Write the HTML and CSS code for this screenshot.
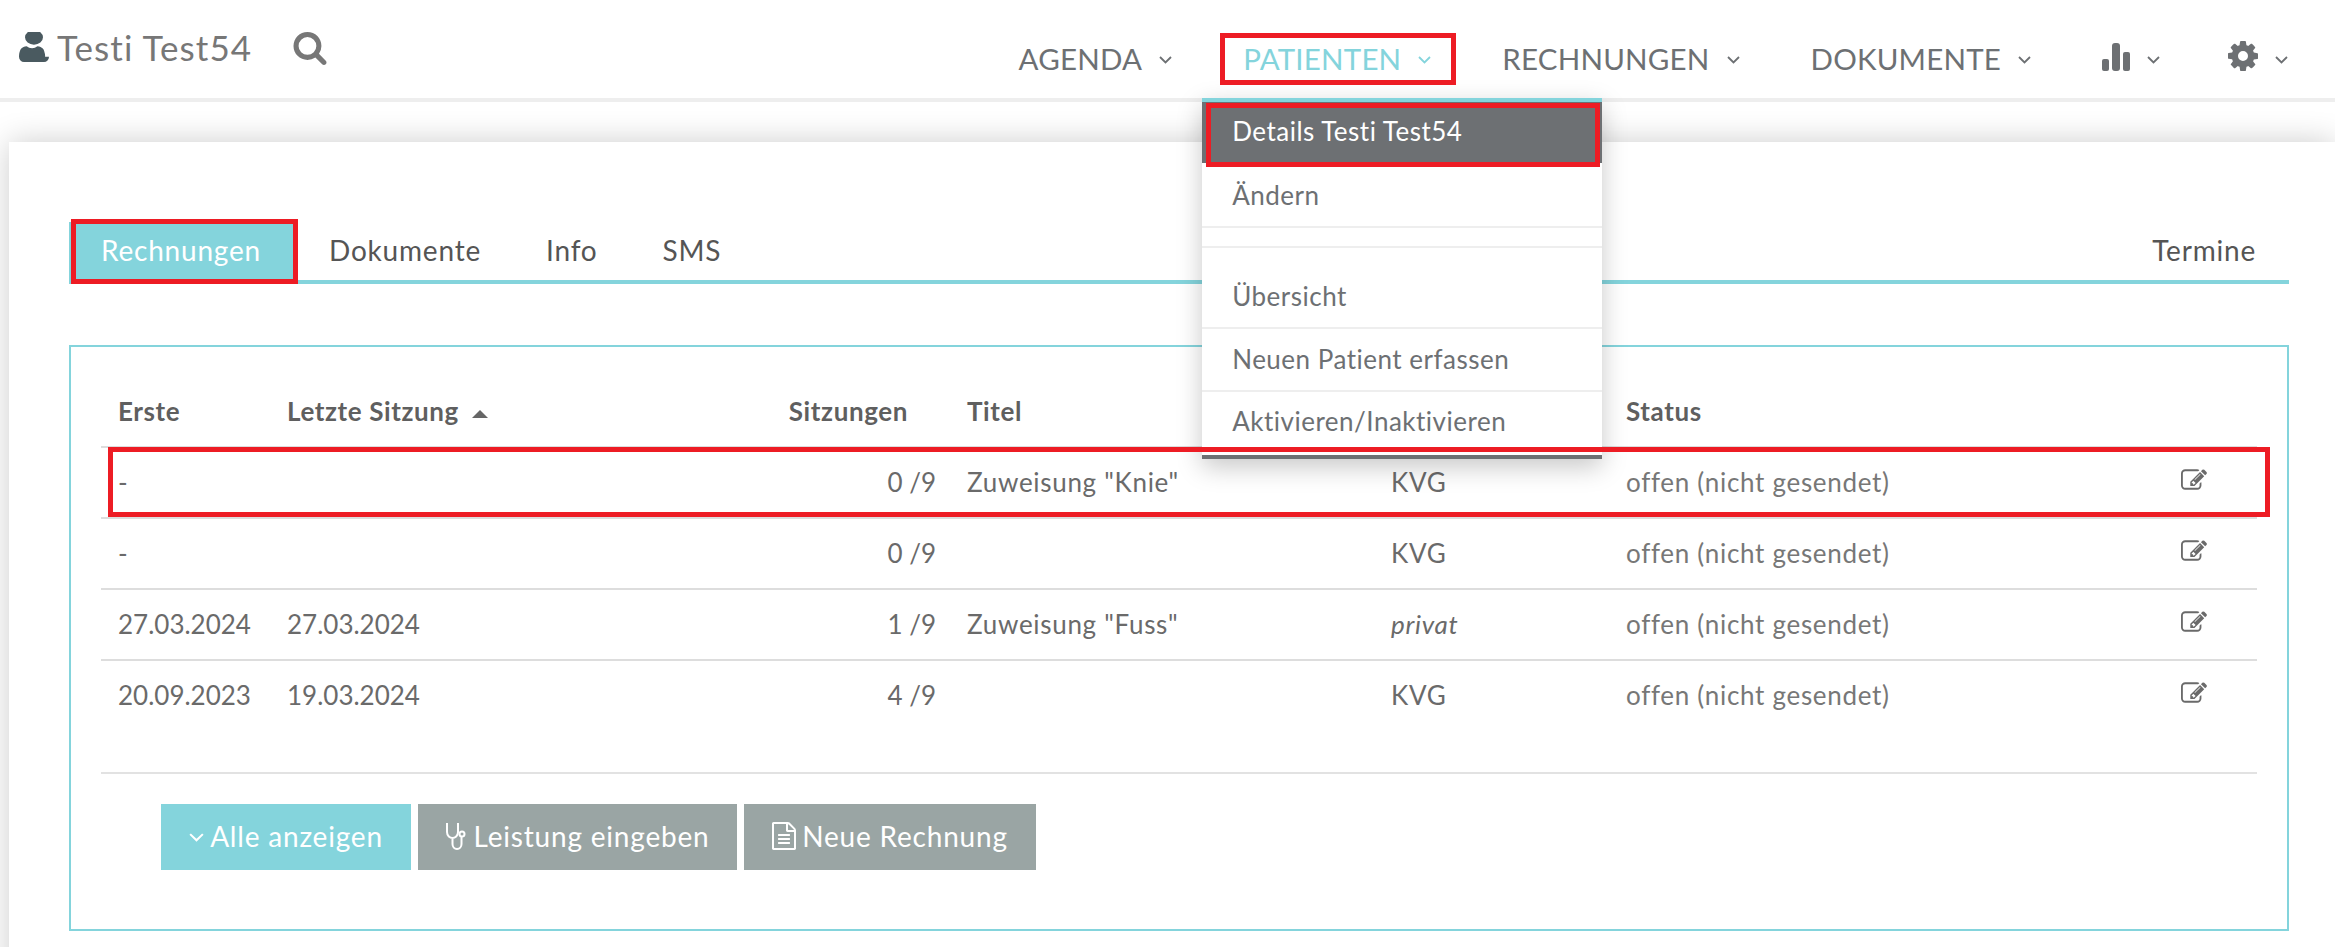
FILE: index.html
```html
<!DOCTYPE html>
<html lang="de">
<head>
  <meta charset="UTF-8">
  <title>Rechnungen - Testi Test54</title>
  <link rel="stylesheet" href="styles.css">
</head>
<body>
  <svg class="sprite" xmlns="http://www.w3.org/2000/svg">
    <symbol id="i-user" viewBox="256 110 1280 1560" preserveAspectRatio="none"><path d="M1536 1399q0 109-62.500 187t-150.500 78h-854q-88 0-150.500-78t-62.500-187q0-85 8.500-157.500t31.500-145.500 58.500-125 94-85 134-33q98 96 230 96t230-96q80 0 134 33t94 85 58.500 125 31.500 145.500 8.500 157.500zm-256-1011q0 159-112.500 271.500t-271.500 112.500-271.500-112.500-112.500-271.500 112.500-271.500 271.500-112.500 271.500 112.500 112.500 271.500z"/></symbol>
    <symbol id="i-search" viewBox="64 128 1664 1664"><path d="M1216 832q0-185-131.500-316.500t-316.500-131.500-316.500 131.500-131.500 316.500 131.500 316.500 316.500 131.500 316.500-131.500 131.500-316.500zm512 832q0 52-38 90t-90 38q-54 0-90-38l-343-342q-179 124-399 124-143 0-273.500-55.500t-225-150-150-225-55.500-273.500 55.500-273.500 150-225 225-150 273.500-55.500 273.500 55.500 225 150 150 225 55.500 273.500q0 220-124 399l343 343q37 37 37 90z"/></symbol>
    <symbol id="i-cog" viewBox="128 128 1536 1536"><path d="M1152 896q0-106-75-181t-181-75-181 75-75 181 75 181 181 75 181-75 75-181zm512-109v222q0 12-8 23t-20 13l-185 28q-19 54-39 91 35 50 107 138 10 12 10 25t-9 23q-27 37-99 108t-94 71q-12 0-26-9l-138-108q-44 23-91 38-16 136-29 186-7 28-36 28h-222q-14 0-24.500-8.500t-11.500-21.500l-28-184q-49-16-90-37l-141 107q-10 9-25 9-14 0-25-11-126-114-165-168-7-10-7-23 0-12 8-23 15-21 51-66.500t54-70.500q-27-50-41-99l-183-27q-13-2-21-12.500t-8-23.500v-222q0-12 8-23t19-13l186-28q14-46 39-92-40-57-107-138-10-12-10-24 0-10 9-23 26-36 98.500-107.500t94.500-71.500q13 0 26 10l138 107q44-23 91-38 16-136 29-186 7-28 36-28h222q14 0 24.500 8.500t11.500 21.500l28 184q49 16 90 37l142-107q9-9 24-9 13 0 25 10 129 119 165 170 7 8 7 22 0 12-8 23-15 21-51 66.500t-54 70.500q26 50 41 98l183 28q13 2 21 12.500t8 23.500z"/></symbol>
    <symbol id="i-edit" viewBox="0 128 1792 1408"><path d="M888 1184l116-116-152-152-116 116v56h96v96h56zm440-720q-16-16-33 1l-350 350q-17 17-1 33t33-1l350-350q17-17 1-33zm80 594v190q0 119-84.500 203.500t-203.500 84.500h-832q-119 0-203.500-84.500t-84.500-203.500v-832q0-119 84.500-203.500t203.500-84.500h832q63 0 117 25 15 7 18 23 3 17-9 29l-49 49q-14 14-32 8-23-6-45-6h-832q-66 0-113 47t-47 113v832q0 66 47 113t113 47h832q66 0 113-47t47-113v-126q0-13 9-22l64-64q15-15 35-7t20 29zm-96-738l288 288-672 672h-288v-288zm444 132l-92 92-288-288 92-92q28-28 68-28t68 28l152 152q28 28 28 68t-28 68z"/></symbol>
    <symbol id="i-file" viewBox="128 0 1536 1792"><path d="M1596 380q28 28 48 76t20 88v1152q0 40-28 68t-68 28h-1344q-40 0-68-28t-28-68v-1600q0-40 28-68t68-28h896q40 0 88 20t76 48zm-444-244v376h376q-10-29-22-41l-313-313q-12-12-41-22zm384 1528v-1024h-416q-40 0-68-28t-28-68v-416h-768v1536h1280zm-1024-864q0-14 9-23t23-9h704q14 0 23 9t9 23v64q0 14-9 23t-23 9h-704q-14 0-23-9t-9-23v-64zm736 224q14 0 23 9t9 23v64q0 14-9 23t-23 9h-704q-14 0-23-9t-9-23v-64q0-14 9-23t23-9h704zm0 256q14 0 23 9t9 23v64q0 14-9 23t-23 9h-704q-14 0-23-9t-9-23v-64q0-14 9-23t23-9h704z"/></symbol>
    <symbol id="i-chevron" viewBox="0 0 13 8" preserveAspectRatio="none"><path d="M1 1l5.500 5.500L12 1" fill="none" stroke="currentColor" stroke-width="1.800"/></symbol>
    <symbol id="i-chart" viewBox="0 0 28 28"><rect x="0" y="16" width="7" height="12" rx="2"/><rect x="10" y="0" width="8" height="28" rx="3"/><rect x="21" y="9" width="7" height="19" rx="2"/></symbol>
    <symbol id="i-stetho" viewBox="0 0 22 27"><path d="M2 1H1v8c0 4 3 6 5.500 6S12 13 12 9V1h-1M6.500 15v6c0 3 2 5 4.500 5s4.500-2 4.500-5v-7" fill="none" stroke="currentColor" stroke-width="2"/><circle cx="16" cy="11" r="2.500" fill="none" stroke="currentColor" stroke-width="2"/></symbol>
  </svg>

  <header class="topbar">
    <div class="who">
      <svg class="icon-user"><use href="#i-user"/></svg>
      <span class="who-name">Testi Test54</span>
      <svg class="icon-search"><use href="#i-search"/></svg>
    </div>
    <nav class="nav">
      <div class="nav-item">AGENDA <svg class="chev"><use href="#i-chevron"/></svg></div>
      <div class="nav-item active">
        PATIENTEN <svg class="chev"><use href="#i-chevron"/></svg>
        <div class="mark mark-nav"></div>
        <div class="menu">
          <div class="menu-item current">Details Testi Test54<div class="mark mark-menu"></div></div>
          <div class="menu-item second">Ändern</div>
          <div class="menu-gap"></div>
          <div class="menu-item first">Übersicht</div>
          <div class="menu-item">Neuen Patient erfassen</div>
          <div class="menu-item last">Aktivieren/Inaktivieren</div>
        </div>
      </div>
      <div class="nav-item">RECHNUNGEN <svg class="chev"><use href="#i-chevron"/></svg></div>
      <div class="nav-item">DOKUMENTE <svg class="chev"><use href="#i-chevron"/></svg></div>
      <div class="nav-item"><svg class="icon-chart"><use href="#i-chart"/></svg> <svg class="chev"><use href="#i-chevron"/></svg></div>
      <div class="nav-item nav-settings"><svg class="icon-cog"><use href="#i-cog"/></svg> <svg class="chev"><use href="#i-chevron"/></svg></div>
    </nav>
  </header>

  <main class="card">
    <div class="tabs">
      <div class="tab selected">Rechnungen<div class="mark mark-tab"></div></div>
      <div class="tab">Dokumente</div>
      <div class="tab">Info</div>
      <div class="tab">SMS</div>
      <div class="tab tab-right">Termine</div>
    </div>

    <section class="box">
      <div class="table-wrap">
        <div class="mark mark-row"></div>
        <table class="bills">
          <colgroup>
            <col class="c-first"><col class="c-last"><col class="c-sess"><col class="c-title"><col class="c-type"><col class="c-status"><col class="c-edit">
          </colgroup>
          <thead>
            <tr>
              <th>Erste</th>
              <th>Letzte Sitzung <span class="sort"></span></th>
              <th class="num">Sitzungen</th>
              <th>Titel</th>
              <th></th>
              <th>Status</th>
              <th></th>
            </tr>
          </thead>
          <tbody>
            <tr>
              <td>-</td><td></td><td class="num">0 /9</td><td>Zuweisung "Knie"</td><td>KVG</td><td class="status">offen (nicht gesendet)</td>
              <td><svg class="icon-edit"><use href="#i-edit"/></svg></td>
            </tr>
            <tr>
              <td>-</td><td></td><td class="num">0 /9</td><td></td><td>KVG</td><td class="status">offen (nicht gesendet)</td>
              <td><svg class="icon-edit"><use href="#i-edit"/></svg></td>
            </tr>
            <tr>
              <td class="date">27.03.2024</td><td class="date">27.03.2024</td><td class="num">1 /9</td><td>Zuweisung "Fuss"</td><td><em>privat</em></td><td class="status">offen (nicht gesendet)</td>
              <td><svg class="icon-edit"><use href="#i-edit"/></svg></td>
            </tr>
            <tr>
              <td class="date">20.09.2023</td><td class="date">19.03.2024</td><td class="num">4 /9</td><td></td><td>KVG</td><td class="status">offen (nicht gesendet)</td>
              <td><svg class="icon-edit"><use href="#i-edit"/></svg></td>
            </tr>
          </tbody>
        </table>
      </div>
      <div class="actions">
        <button class="btn btn-teal"><svg class="chev"><use href="#i-chevron"/></svg> Alle anzeigen</button>
        <button class="btn btn-service"><svg class="icon-stetho"><use href="#i-stetho"/></svg> Leistung eingeben</button>
        <button class="btn btn-new"><svg class="icon-file"><use href="#i-file"/></svg> Neue Rechnung</button>
      </div>
    </section>
  </main>
</body>
</html>
```

FILE: styles.css
```css
* {
  box-sizing: border-box;
}

body {
  margin: 0;
  background: #fff;
  font-family: Lato, "Noto Sans", sans-serif;
  font-size: 26px;
  font-variant-ligatures: none;
  letter-spacing: 0.7px;
  color: #6a6a6a;
  overflow: hidden;
}

svg {
  fill: currentColor;
  flex: none;
}

.sprite {
  display: none;
}

/* red annotation frames */
.mark {
  position: absolute;
  border: 5px solid #ed1c24;
  pointer-events: none;
  z-index: 6;
}

.mark-nav {
  left: -23px;
  right: -25px;
  top: 33px;
  height: 52px;
}

.mark-menu {
  left: 4px;
  right: 2px;
  top: 1px;
  bottom: -4px;
}

.mark-tab {
  left: 2px;
  right: -1px;
  top: -3px;
  bottom: 0;
}

.mark-row {
  left: 7px;
  width: 2162px;
  top: 70px;
  height: 70px;
}

/* header */
.topbar {
  display: flex;
  justify-content: space-between;
  height: 102px;
  border-bottom: 4px solid #eee;
}

.who {
  display: flex;
  align-items: flex-start;
  padding: 32px 0 0 19px;
  color: #777;
}

.icon-user {
  width: 30px;
  height: 30px;
  color: #4a5a60;
}

.who-name {
  margin-left: 8px;
  font-size: 35px;
  letter-spacing: 1.1px;
  line-height: 30px;
}

.icon-search {
  width: 34px;
  height: 33px;
  margin-left: 41px;
}

.nav {
  display: flex;
  gap: 71px;
  padding-right: 47px;
  height: 98px;
}

.nav-item {
  position: relative;
  display: flex;
  align-items: center;
  gap: 17px;
  height: 98px;
  padding-top: 18px;
  font-size: 29.5px;
  letter-spacing: 0.2px;
  color: #6d7073;
}

.nav-item.active {
  color: #84d4dc;
}

.nav-settings {
  margin-left: -3px;
}

.chev {
  width: 13px;
  height: 8px;
  margin-top: 3px;
}

.icon-chart {
  width: 28px;
  height: 28px;
  margin-top: -2px;
}

.icon-cog {
  width: 30px;
  height: 30px;
  margin-top: -5px;
}

/* dropdown */
.menu {
  position: absolute;
  top: 98px;
  left: -41px;
  width: 400px;
  background: #fff;
  border-top: 4px solid #84d4dc;
  border-bottom: 4px solid #6d7073;
  box-shadow: 0 8px 24px rgba(0, 0, 0, 0.22);
  z-index: 5;
  font-size: 26px;
  letter-spacing: 0.5px;
  color: #6d7073;
}

.menu-item {
  position: relative;
  height: 63px;
  line-height: 60px;
  padding-left: 30px;
  border-bottom: 2px solid #eee;
}

.menu-item.current {
  height: 61px;
  line-height: 58px;
  background: #6d7073;
  color: #fff;
  border-bottom: 0;
}

.menu-item.second {
  height: 65px;
  line-height: 64px;
}

.menu-gap {
  height: 20px;
  border-bottom: 2px solid #eee;
}

.menu-item.first {
  height: 81px;
  line-height: 96px;
}

.menu-item.last {
  height: 63px;
  line-height: 58px;
  border-bottom: 0;
}

/* content card */
.card {
  height: 845px;
  margin: 40px 0 0 9px;
  padding: 80px 46px 16px 60px;
  background: #fff;
  box-shadow: 0 0 30px rgba(0, 0, 0, 0.2);
}

.tabs {
  display: flex;
  height: 62px;
  border-bottom: 4px solid #84d4dc;
  color: #555;
}

.tab {
  position: relative;
  height: 62px;
  padding: 0 33px 0 32px;
  line-height: 56px;
  font-size: 28px;
  letter-spacing: 0.8px;
}

.tab.selected {
  width: 228px;
  background: #84d4dc;
  color: #fff;
}

.tab-right {
  margin-left: auto;
}

.box {
  margin-top: 61px;
  padding: 30px 30px 59px;
  border: 2px solid #84d4dc;
}

.table-wrap {
  position: relative;
  padding-bottom: 41px;
  border-bottom: 2px solid #e2e2e2;
}

.bills {
  width: 2156px;
  table-layout: fixed;
  border-collapse: collapse;
}

.c-first { width: 169px; }
.c-last { width: 500px; }
.c-sess { width: 180px; }
.c-title { width: 424px; }
.c-type { width: 235px; }
.c-status { width: 555px; }
.c-edit { width: 93px; }

.bills th,
.bills td {
  padding: 0 0 2px 17px;
  text-align: left;
  white-space: nowrap;
  overflow: visible;
}

.bills th {
  height: 70px;
  border-bottom: 2px solid #ddd;
  font-weight: 700;
  letter-spacing: 0.6px;
  color: #5f5f5f;
}

.bills td {
  height: 71px;
  border-bottom: 2px solid #ddd;
}

.bills td.date {
  letter-spacing: 0;
}

.bills td.status {
  color: #777;
}

.bills tbody tr:last-child td {
  border-bottom: 0;
}

.bills th.num {
  text-align: right;
  padding-right: 42px;
}

.bills td.num {
  text-align: right;
  padding-right: 14px;
  letter-spacing: 0;
}

.sort {
  display: inline-block;
  margin-left: 6px;
  vertical-align: 3px;
  border-left: 8px solid transparent;
  border-right: 8px solid transparent;
  border-bottom: 8px solid #666;
}

.icon-edit {
  width: 26px;
  height: 21px;
  display: block;
  margin-top: -5px;
}

.actions {
  display: flex;
  gap: 7px;
  padding: 30px 0 0 60px;
}

.btn {
  display: flex;
  align-items: center;
  justify-content: center;
  gap: 6px;
  width: 292px;
  height: 66px;
  padding: 0 0 2px;
  border: 0;
  background: #9aa5a4;
  color: #fff;
  font: inherit;
  font-size: 28px;
  letter-spacing: 0.8px;
}

.btn .chev {
  width: 15px;
  height: 9px;
}

.btn-teal {
  width: 250px;
  background: #84d4dc;
}

.btn-service {
  width: 319px;
}

.icon-stetho {
  width: 22px;
  height: 27px;
}

.icon-file {
  width: 24px;
  height: 28px;
}
```
